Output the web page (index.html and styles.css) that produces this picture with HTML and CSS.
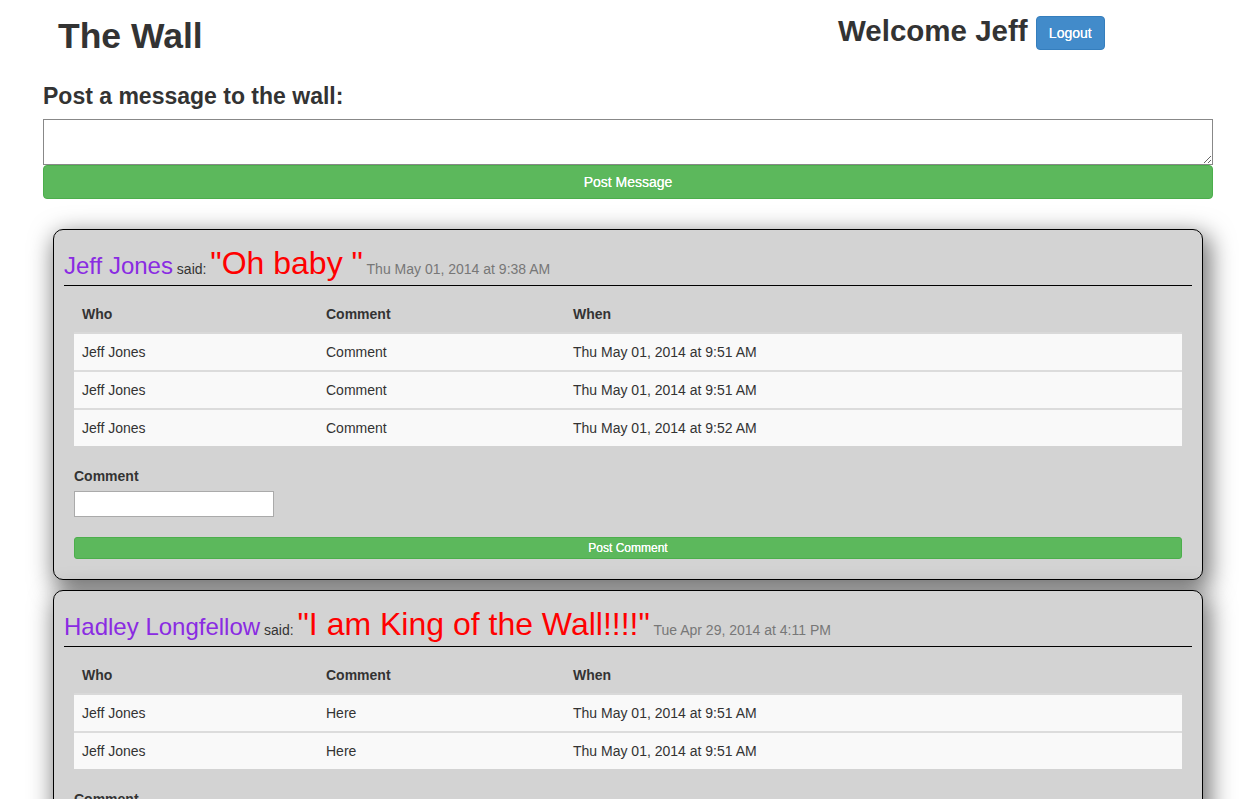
FILE: index.html
```html
<!DOCTYPE html>
<html>
<head>
<meta charset="utf-8">
<title>The Wall</title>
<link rel="stylesheet" href="styles.css">
</head>
<body>
<div class="container">
  <div class="top-row">
    <div class="col-left"><h1 class="title">The Wall</h1></div>
    <div class="col-right"><h2 class="welcome">Welcome Jeff <button class="btn btn-primary">Logout</button></h2></div>
  </div>
  <h3 class="post-title">Post a message to the wall:</h3>
  <textarea class="msg-box"></textarea>
  <button class="btn btn-success btn-block">Post Message</button>

  <div class="card">
    <div class="post-head"><span class="author">Jeff Jones</span> <span class="said">said:</span> <span class="msg">"Oh baby "</span> <span class="date">Thu May 01, 2014 at 9:38 AM</span></div>
    <table class="comments">
      <thead><tr><th class="c1">Who</th><th class="c2">Comment</th><th>When</th></tr></thead>
      <tbody>
        <tr><td>Jeff Jones</td><td>Comment</td><td>Thu May 01, 2014 at 9:51 AM</td></tr>
        <tr><td>Jeff Jones</td><td>Comment</td><td>Thu May 01, 2014 at 9:51 AM</td></tr>
        <tr><td>Jeff Jones</td><td>Comment</td><td>Thu May 01, 2014 at 9:52 AM</td></tr>
      </tbody>
    </table>
    <div class="comment-form">
      <label class="lbl">Comment</label>
      <input class="cmt-input" type="text">
      <button class="btn btn-success btn-xs">Post Comment</button>
    </div>
  </div>

  <div class="card">
    <div class="post-head"><span class="author">Hadley Longfellow</span> <span class="said">said:</span> <span class="msg">"I am King of the Wall!!!!"</span> <span class="date">Tue Apr 29, 2014 at 4:11 PM</span></div>
    <table class="comments">
      <thead><tr><th class="c1">Who</th><th class="c2">Comment</th><th>When</th></tr></thead>
      <tbody>
        <tr><td>Jeff Jones</td><td>Here</td><td>Thu May 01, 2014 at 9:51 AM</td></tr>
        <tr><td>Jeff Jones</td><td>Here</td><td>Thu May 01, 2014 at 9:51 AM</td></tr>
      </tbody>
    </table>
    <div class="comment-form">
      <label class="lbl">Comment</label>
      <input class="cmt-input" type="text">
      <button class="btn btn-success btn-xs">Post Comment</button>
    </div>
  </div>
</div>
</body>
</html>
```
FILE: styles.css
```css
* { box-sizing: border-box; }
html, body { margin: 0; padding: 0; background: #fff; }
body {
  font-family: "Liberation Sans", Arial, sans-serif;
  font-size: 14px;
  line-height: 20px;
  color: #333;
}
.container {
  width: 1170px;
  margin-left: 43px;
  padding-bottom: 40px;
}
.top-row {
  display: flex;
}
.col-left { width: 780px; padding-left: 15px; }
.col-right { width: 390px; padding-left: 15px; }
.title {
  margin: 16px 0 0;
  font-size: 35.5px;
  line-height: 40px;
  font-weight: bold;
}
.welcome {
  margin: 14px 0 0;
  font-size: 29.5px;
  line-height: 33px;
  font-weight: bold;
  white-space: nowrap;
}
.btn {
  font-family: "Liberation Sans", Arial, sans-serif;
  font-size: 14px;
  line-height: 20px;
  padding: 6px 12px;
  border: 1px solid transparent;
  border-radius: 4px;
  color: #fff;
  cursor: pointer;
  text-shadow: 0 0 0.4px #fff;
}
.btn-primary {
  background: #428bca;
  border-color: #357ebd;
  vertical-align: middle;
}
.btn-success {
  background: #5cb85c;
  border-color: #4cae4c;
}
.btn-block {
  display: block;
  width: 100%;
}
.post-title {
  margin: 27px 0 10px;
  font-size: 23px;
  line-height: 26px;
  font-weight: bold;
}
.msg-box {
  display: block;
  width: 100%;
  height: 46px;
  margin: 0;
  border: 1px solid #888;
  border-radius: 0;
  font-family: "Liberation Sans", Arial, sans-serif;
}
.card {
  margin: 30px 10px 10px;
  padding: 10px 10px 20px;
  background: #d3d3d3;
  border: 1px solid #000;
  border-radius: 10px;
  box-shadow: 4px 8px 24px 3px rgba(0, 0, 0, 0.55);
}
.card + .card { margin-top: 10px; }
.post-head {
  margin-top: 7px;
  padding-bottom: 6px;
  border-bottom: 1px solid #000;
  line-height: 1;
  white-space: nowrap;
}
.author { font-size: 24px; color: #8a2be2; }
.said { font-size: 14px; color: #333; }
.msg { font-size: 32px; color: #f00; }
.date { font-size: 14px; color: #777; }
.comments {
  width: calc(100% - 20px);
  margin: 10px 10px 20px;
  border-collapse: collapse;
}
.comments th {
  text-align: left;
  font-weight: bold;
  padding: 8px;
  border-bottom: 2px solid #d9d9d9;
}
.comments th.c1 { width: 244px; }
.comments th.c2 { width: 247px; }
.comments td {
  padding: 8px;
  background: #f9f9f9;
  border-top: 2px solid #dcdcdc;
}
.comments tbody tr:first-child td { border-top: none; }
.comment-form { padding: 0 10px; }
.lbl {
  display: block;
  font-weight: bold;
  margin-bottom: 5px;
}
.cmt-input {
  display: block;
  width: 200px;
  height: 26px;
  margin: 0 0 20px;
  border: 1px solid #aaa;
  background: #fff;
  padding: 2px 4px;
}
.btn-xs {
  display: block;
  width: 100%;
  padding: 1px 5px;
  font-size: 12px;
  line-height: 18px;
  border-radius: 3px;
}
```
